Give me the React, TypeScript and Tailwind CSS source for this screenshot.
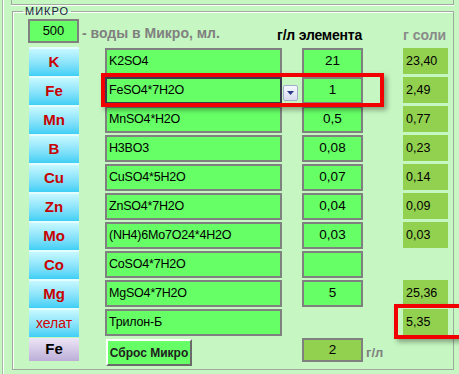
import React from "react";

/* ---------------- DATA ---------------- */

type Row = {
  el: string;
  salt: string;
  val: string | null;
  g: string | null;
  active?: boolean;
  small?: boolean;
};

const rows: Row[] = [
  { el: "K", salt: "K2SO4", val: "21", g: "23,40" },
  { el: "Fe", salt: "FeSO4*7H2O", val: "1", g: "2,49", active: true },
  { el: "Mn", salt: "MnSO4*H2O", val: "0,5", g: "0,77" },
  { el: "B", salt: "H3BO3", val: "0,08", g: "0,23" },
  { el: "Cu", salt: "CuSO4*5H2O", val: "0,07", g: "0,14" },
  { el: "Zn", salt: "ZnSO4*7H2O", val: "0,04", g: "0,09" },
  { el: "Mo", salt: "(NH4)6Mo7O24*4H2O", val: "0,03", g: "0,03" },
  { el: "Co", salt: "CoSO4*7H2O", val: "", g: null },
  { el: "Mg", salt: "MgSO4*7H2O", val: "5", g: "25,36" },
  { el: "хелат", salt: "Трилон-Б", val: null, g: "5,35", small: true },
];

/* ---------------- PARTS ---------------- */

function ElementButton({ label, small }: { label: string; small?: boolean }) {
  return (
    <div className="flex h-[29px] w-[50px] shrink-0 items-center justify-center border-t-2 border-[#e4fdff] bg-linear-to-b from-[#c6f8ff] to-[#3ccff5]">
      <span
        className={
          small
            ? "text-[14px] text-[#d40000]"
            : "text-[15px] font-bold text-[#c80000]"
        }
      >
        {label}
      </span>
    </div>
  );
}

function Dropdown() {
  return (
    <div className="ml-[1px] mt-[9px] flex h-[16px] w-[15px] items-center justify-center rounded-[2px] border border-[#a4accc] bg-linear-to-b from-[#f6f8fe] to-[#d6dbee]">
      <svg width="7" height="4" viewBox="0 0 7 4">
        <path d="M0 0 H7 L3.5 4 Z" fill="#2b3a86" />
      </svg>
    </div>
  );
}

/* ---------------- MAIN COMPONENT ---------------- */

export default function App() {
  return (
    <div className="relative h-[374px] w-[459px] overflow-hidden bg-[#c6f7c2] pl-[2px] font-['Liberation_Sans',Arial,sans-serif] text-black">
      <div className="h-full border-l border-[#a6b8a4] shadow-[inset_1px_0_0_#ffffff]">
        {/* bottom edge of the panel above */}
        <div className="ml-[8px] h-[5px] w-[443px] border-x border-b border-[#a0a8a0] shadow-[0_1px_0_#ffffff]" />

        {/* МИКРО group */}
        <fieldset className="ml-[9px] h-[365px] w-[442px] border border-[#a0a8a0] pl-[16px] shadow-[inset_1px_1px_0_#ffffff]">
          <legend className="ml-[-6px] px-[2px] text-[11px] leading-[13px] tracking-[1px] text-[#1a1a40]">
            МИКРО
          </legend>

          {/* header */}
          <div className="mt-[1px] flex h-[24px] items-center">
            <div className="flex w-[248px] items-center">
              <div className="ml-[-1px] flex h-[24px] w-[51px] items-center justify-center border-2 border-[#808080] bg-[#66ff66] text-[13px]">
                500
              </div>
              <span className="ml-[3px] mt-[4px] whitespace-nowrap text-[14px] font-bold text-[#808080]">
                - воды в Микро, мл.
              </span>
            </div>
            <span className="mt-[8px] w-[82px] whitespace-nowrap text-[14px] font-bold tracking-[-0.2px]">
              г/л элемента
            </span>
            <span className="ml-[44px] mt-[8px] whitespace-nowrap text-[14px] font-bold text-[#8a8a8a]">
              г соли
            </span>
          </div>

          {/* rows */}
          <div className="mt-[4px] flex flex-col">
            {rows.map((r) => (
              <div key={r.el + r.salt} className="flex h-[29px] items-start">
                <ElementButton label={r.el} small={r.small} />
                <div
                  className={
                    "ml-[26px] mt-[1px] flex h-[27px] w-[177px] items-center overflow-hidden whitespace-nowrap border-2 bg-[#66ff66] pl-[2px] text-[12.5px] tracking-[-0.2px] " +
                    (r.active ? "border-[#3c3a4e]" : "border-[#808080]")
                  }
                >
                  {r.salt}
                </div>
                <div className="w-[20px]">{r.active && <Dropdown />}</div>
                {r.val !== null ? (
                  <div className="mt-[1px] flex h-[27px] w-[61px] items-center justify-center border-2 border-[#808080] bg-[#66ff66] text-[13.5px]">
                    {r.val}
                  </div>
                ) : (
                  <div className="w-[61px]" />
                )}
                {r.g !== null && (
                  <div className="ml-[40px] mt-[1px] flex h-[26px] w-[45px] items-center bg-[#92d050] pl-[3px] text-[12.5px]">
                    {r.g}
                  </div>
                )}
              </div>
            ))}

            {/* bottom row */}
            <div className="flex h-[30px] items-start">
              <div className="mt-[1px] flex h-[23px] w-[50px] items-center justify-center bg-linear-to-b from-[#eee6f6] to-[#bcaed8] text-[15px] font-bold">
                Fe
              </div>
              <button className="ml-[27px] mt-[2px] flex h-[27px] w-[86px] items-center justify-center border-2 border-b-[#6a6a6a] border-l-[#ffffff] border-r-[#6a6a6a] border-t-[#ffffff] bg-[#66ff66] text-[12px] font-bold text-[#202020]">
                Сброс Микро
              </button>
              <div className="ml-[110px] mt-[1px] flex h-[24px] w-[61px] items-center justify-center border-2 border-[#808080] bg-[#92d050] text-[13.5px]">
                2
              </div>
              <span className="ml-[3px] mt-[6px] text-[13px] font-bold text-[#808080]">
                г/л
              </span>
            </div>
          </div>
        </fieldset>
      </div>

      {/* red annotation frames */}
      <div className="absolute left-[101px] top-[73px] h-[34px] w-[283px] border-4 border-[#f20000] shadow-[3px_3px_5px_rgba(0,0,0,0.35)]" />
      <div className="absolute left-[394px] top-[304px] h-[35px] w-[80px] border-4 border-[#f20000] shadow-[3px_3px_5px_rgba(0,0,0,0.35)]" />
    </div>
  );
}
